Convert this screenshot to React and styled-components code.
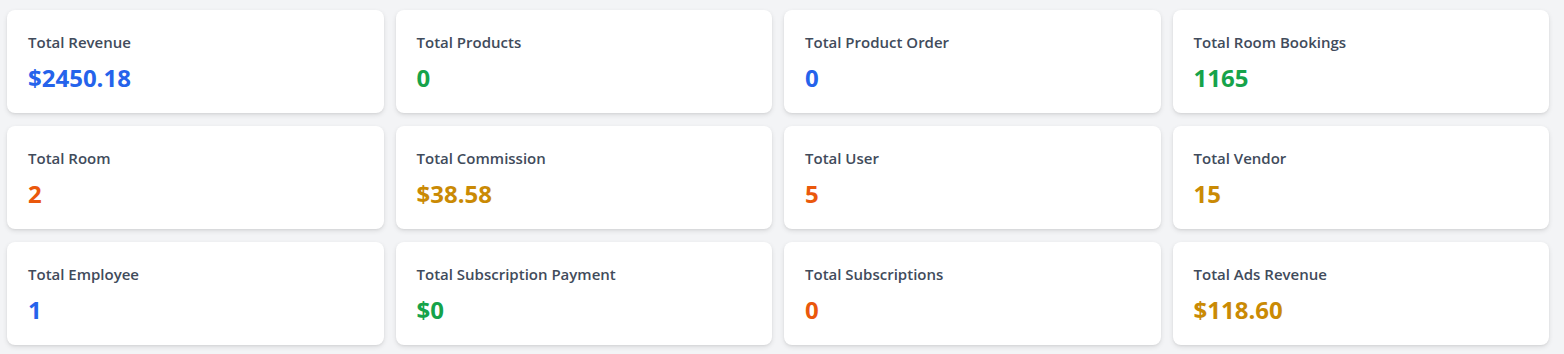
import React from "react";
import styled, { createGlobalStyle } from "styled-components";

const Global = createGlobalStyle`
  html, body { margin: 0; padding: 0; background: #f3f4f6; }
  body { font-family: "Open Sans", "Noto Sans", "Liberation Sans", sans-serif; }
`;

const Page = styled.div`
  padding: 10px 15px 8px 7px;
`;

const Grid = styled.div`
  display: grid;
  grid-template-columns: repeat(4, 1fr);
  column-gap: 12px;
  row-gap: 13px;
`;

const Card = styled.div`
  background: #ffffff;
  border-radius: 8px;
  box-shadow: 0 2px 5px rgba(0, 0, 0, 0.1), 0 1px 2px rgba(0, 0, 0, 0.05);
  padding: 22px 21px 0;
  height: 103px;
  box-sizing: border-box;
  display: flex;
  flex-direction: column;
  gap: 10px;
`;

const Label = styled.div`
  font-size: 15px;
  line-height: 20px;
  font-weight: 600;
  color: #414b5b;
`;

const colors = {
  blue: "#2563eb",
  green: "#16a34a",
  orange: "#ea580c",
  amber: "#ca8a04",
};

const Value = styled.div`
  font-size: 24px;
  line-height: 32px;
  font-weight: 700;
  color: ${(p) => colors[p.$tone]};
`;

const stats = [
  ["Total Revenue", "$2450.18", "blue"],
  ["Total Products", "0", "green"],
  ["Total Product Order", "0", "blue"],
  ["Total Room Bookings", "1165", "green"],
  ["Total Room", "2", "orange"],
  ["Total Commission", "$38.58", "amber"],
  ["Total User", "5", "orange"],
  ["Total Vendor", "15", "amber"],
  ["Total Employee", "1", "blue"],
  ["Total Subscription Payment", "$0", "green"],
  ["Total Subscriptions", "0", "orange"],
  ["Total Ads Revenue", "$118.60", "amber"],
];

export default function App() {
  return (
    <>
      <Global />
      <Page>
        <Grid>
          {stats.map(([label, value, tone]) => (
            <Card key={label}>
              <Label>{label}</Label>
              <Value $tone={tone}>{value}</Value>
            </Card>
          ))}
        </Grid>
      </Page>
    </>
  );
}
